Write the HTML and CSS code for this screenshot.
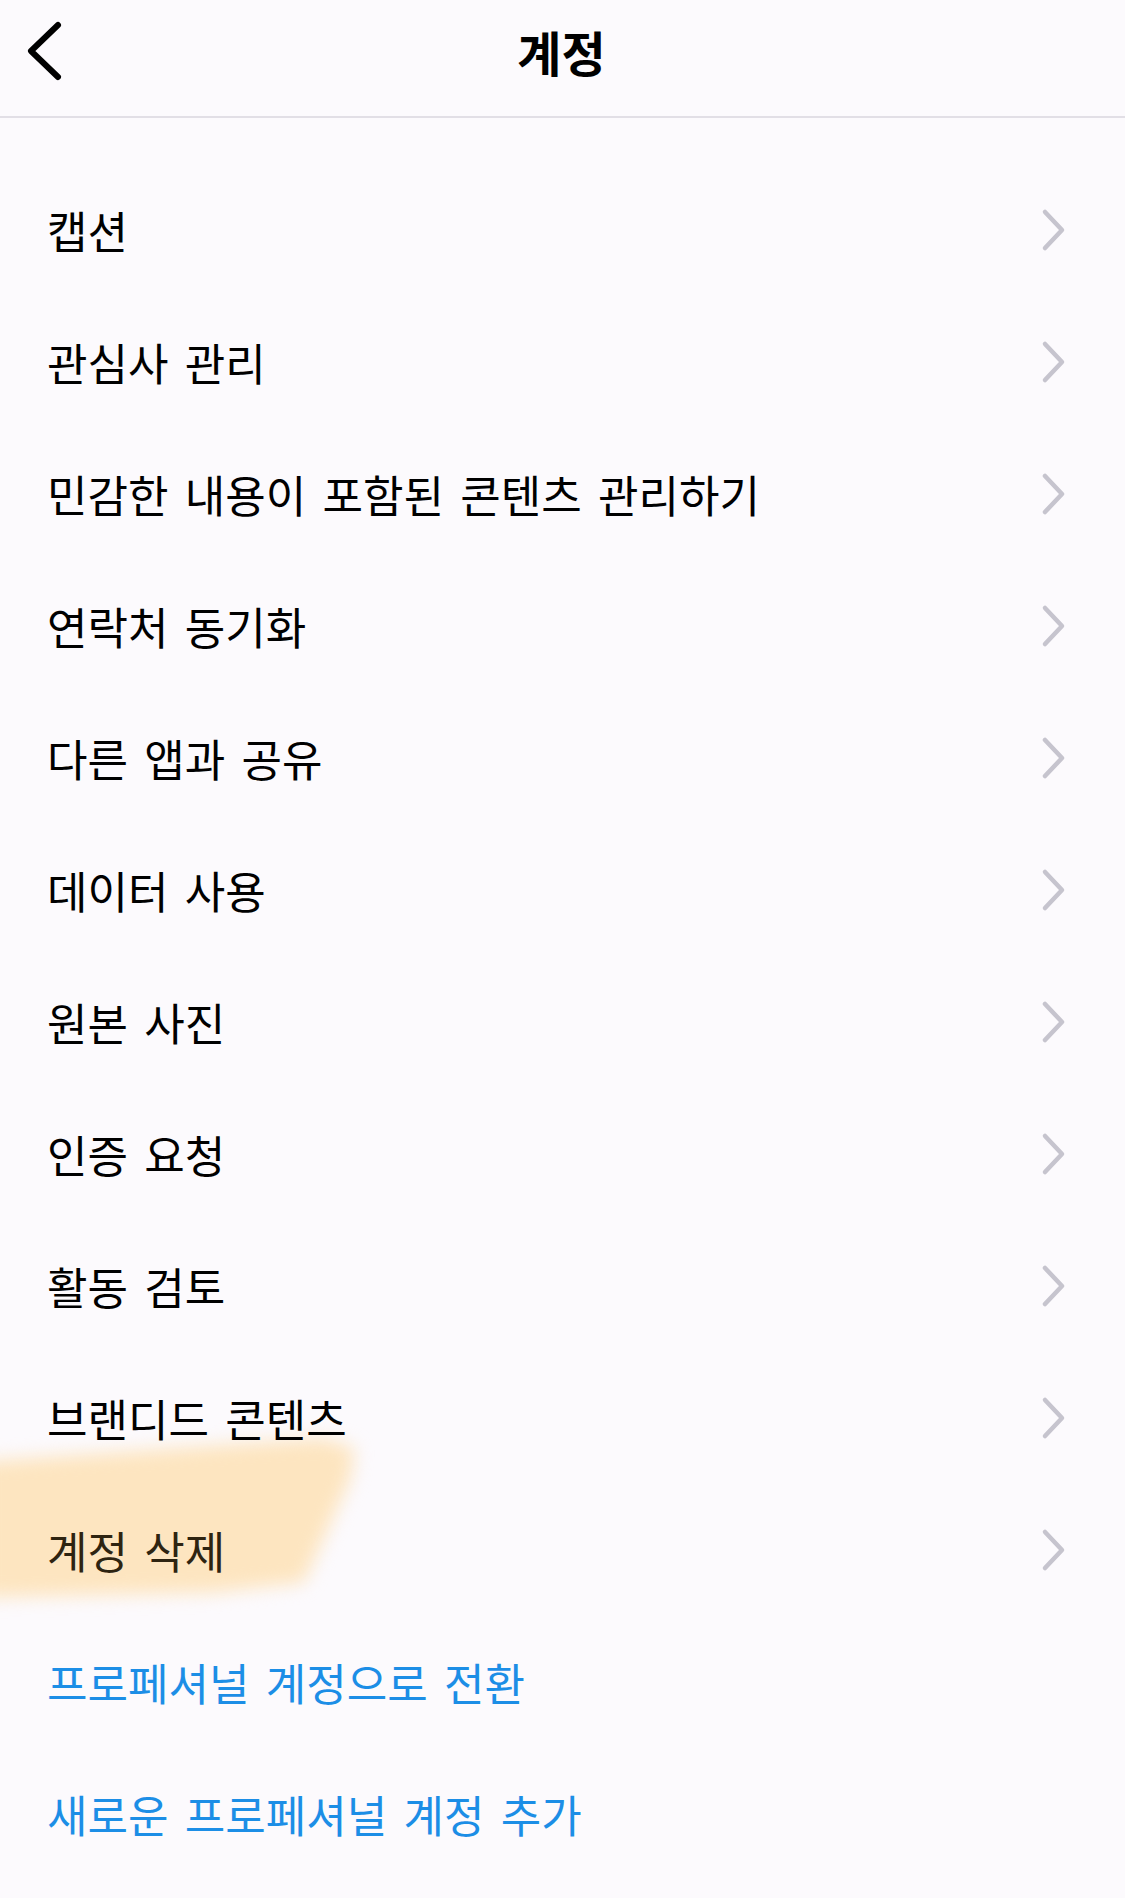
FILE: index.html
```html
<!DOCTYPE html>
<html lang="ko">
<head>
<meta charset="utf-8">
<title>계정</title>
<link rel="stylesheet" href="styles.css">
</head>
<body>
<div class="screen">
  <header class="topbar">
    <div class="back">
      <svg width="44" height="64" viewBox="0 0 44 64"><path d="M34 5 L7 31 L34 57" fill="none" stroke="#000" stroke-width="6" stroke-linecap="round" stroke-linejoin="round"/></svg>
    </div>
    <h1 class="title">계정</h1>
    <div class="spacer"></div>
  </header>
  <main class="list">
    <div class="marker"><div class="marker-shape"></div></div>
    <div class="row"><span class="label">캡션</span><svg class="chev" width="26" height="44" viewBox="0 0 26 44"><path d="M4 4 L21 22 L4 40" fill="none" stroke="#c6c4ce" stroke-width="4.5" stroke-linecap="round" stroke-linejoin="round"/></svg></div>
    <div class="row"><span class="label">관심사 관리</span><svg class="chev" width="26" height="44" viewBox="0 0 26 44"><path d="M4 4 L21 22 L4 40" fill="none" stroke="#c6c4ce" stroke-width="4.5" stroke-linecap="round" stroke-linejoin="round"/></svg></div>
    <div class="row"><span class="label">민감한 내용이 포함된 콘텐츠 관리하기</span><svg class="chev" width="26" height="44" viewBox="0 0 26 44"><path d="M4 4 L21 22 L4 40" fill="none" stroke="#c6c4ce" stroke-width="4.5" stroke-linecap="round" stroke-linejoin="round"/></svg></div>
    <div class="row"><span class="label">연락처 동기화</span><svg class="chev" width="26" height="44" viewBox="0 0 26 44"><path d="M4 4 L21 22 L4 40" fill="none" stroke="#c6c4ce" stroke-width="4.5" stroke-linecap="round" stroke-linejoin="round"/></svg></div>
    <div class="row"><span class="label">다른 앱과 공유</span><svg class="chev" width="26" height="44" viewBox="0 0 26 44"><path d="M4 4 L21 22 L4 40" fill="none" stroke="#c6c4ce" stroke-width="4.5" stroke-linecap="round" stroke-linejoin="round"/></svg></div>
    <div class="row"><span class="label">데이터 사용</span><svg class="chev" width="26" height="44" viewBox="0 0 26 44"><path d="M4 4 L21 22 L4 40" fill="none" stroke="#c6c4ce" stroke-width="4.5" stroke-linecap="round" stroke-linejoin="round"/></svg></div>
    <div class="row"><span class="label">원본 사진</span><svg class="chev" width="26" height="44" viewBox="0 0 26 44"><path d="M4 4 L21 22 L4 40" fill="none" stroke="#c6c4ce" stroke-width="4.5" stroke-linecap="round" stroke-linejoin="round"/></svg></div>
    <div class="row"><span class="label">인증 요청</span><svg class="chev" width="26" height="44" viewBox="0 0 26 44"><path d="M4 4 L21 22 L4 40" fill="none" stroke="#c6c4ce" stroke-width="4.5" stroke-linecap="round" stroke-linejoin="round"/></svg></div>
    <div class="row"><span class="label">활동 검토</span><svg class="chev" width="26" height="44" viewBox="0 0 26 44"><path d="M4 4 L21 22 L4 40" fill="none" stroke="#c6c4ce" stroke-width="4.5" stroke-linecap="round" stroke-linejoin="round"/></svg></div>
    <div class="row"><span class="label">브랜디드 콘텐츠</span><svg class="chev" width="26" height="44" viewBox="0 0 26 44"><path d="M4 4 L21 22 L4 40" fill="none" stroke="#c6c4ce" stroke-width="4.5" stroke-linecap="round" stroke-linejoin="round"/></svg></div>
    <div class="row"><span class="label marked">계정 삭제</span><svg class="chev" width="26" height="44" viewBox="0 0 26 44"><path d="M4 4 L21 22 L4 40" fill="none" stroke="#c6c4ce" stroke-width="4.5" stroke-linecap="round" stroke-linejoin="round"/></svg></div>
    <div class="row"><span class="label link">프로페셔널 계정으로 전환</span></div>
    <div class="row"><span class="label link">새로운 프로페셔널 계정 추가</span></div>
  </main>
</div>
</body>
</html>
```
FILE: styles.css
```css
html, body {
  margin: 0;
  padding: 0;
  background: #fcfafd;
}
body {
  font-family: "Noto Sans CJK KR", "Noto Sans", sans-serif;
  color: #000;
}
.screen {
  width: 1125px;
  min-height: 1898px;
  overflow: hidden;
}
.topbar {
  height: 118px;
  border-bottom: 2px solid #e2dfe6;
  box-sizing: border-box;
  display: grid;
  grid-template-columns: 1fr auto 1fr;
  align-items: start;
  padding: 20px 0 0 24px;
}
.back {
  width: 44px;
  height: 64px;
}
.back svg {
  display: block;
}
.title {
  margin: 0 26px 0 0;
  font-size: 48px;
  font-weight: 700;
  letter-spacing: 0;
  line-height: 62px;
}
.spacer {
  height: 1px;
}
.list {
  position: relative;
  padding-top: 46px;
}
.marker {
  position: absolute;
  left: -20px;
  top: 1320px;
  width: 390px;
  height: 168px;
  filter: blur(9px);
  z-index: 0;
}
.marker-shape {
  width: 100%;
  height: 100%;
  background: #fde5c0;
  clip-path: polygon(0 14%, 88% 0, 96% 6%, 95% 24%, 83% 86%, 60% 92%, 0 95%);
}
.row {
  position: relative;
  z-index: 1;
  height: 132px;
  display: flex;
  align-items: center;
  justify-content: space-between;
  padding: 0 58px 0 47px;
}
.label {
  font-size: 44px;
  letter-spacing: 0;
  word-spacing: 4px;
  line-height: 1;
}
.marked {
  color: #2e2411;
}
.link {
  color: #1c8ee6;
}
.chev {
  display: block;
}
```
